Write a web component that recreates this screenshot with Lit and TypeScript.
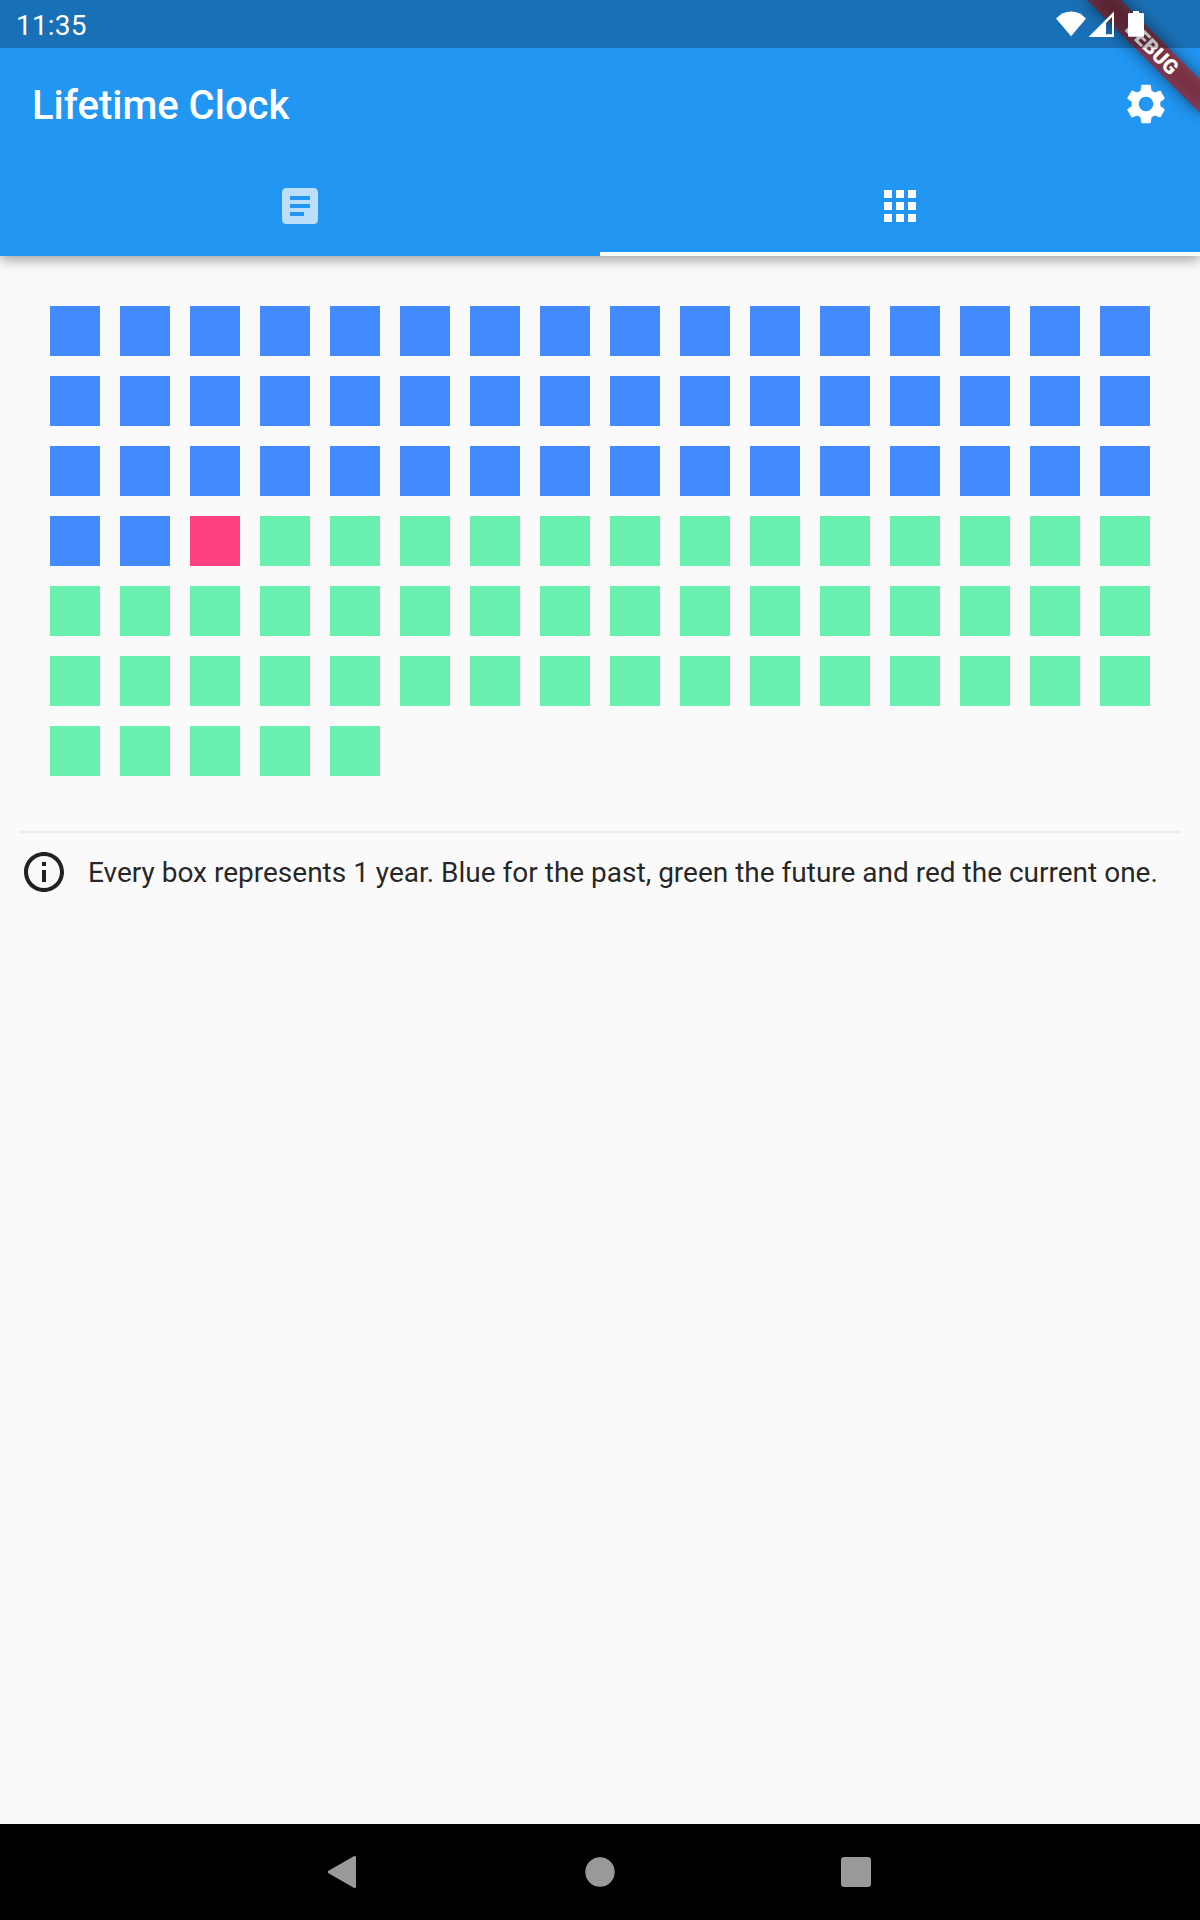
import { LitElement, html, css } from "lit";
import { customElement, property } from "lit/decorators.js";
import { classMap } from "lit/directives/class-map.js";

@customElement("status-bar")
class StatusBar extends LitElement {
  static styles = css`
    :host {
      display: flex;
      align-items: center;
      justify-content: space-between;
      height: 48px;
      box-sizing: border-box;
      padding: 0 54px 0 16px;
      background: rgba(0, 0, 0, 0.25);
      color: #fff;
      position: relative;
      z-index: 2;
    }
    .time {
      font-size: 28px;
      letter-spacing: 0.2px;
      line-height: 48px;
      padding-top: 2px;
      height: 46px;
    }
    svg {
      display: block;
    }
  `;
  render() {
    return html`
      <span class="time">11:35</span>
      <svg width="94" height="48" viewBox="1052 0 94 48" fill="#fff">
        <path d="M1071.1 36.3L1056 18.6Q1062.300 11.500 1071.100 11.500T1086 18.600Z" />
        <path fill-rule="evenodd" d="M1114 11.500V37H1088.500ZM1112 17L1106 23V34.200H1112Z" />
        <path d="M1133 11h6v2h3.700q1.300 0 1.300 1.300v21.200q0 1.300-1.300 1.300h-13.400q-1.300 0-1.300-1.300V14.300q0-1.300 1.300-1.300h3.700z" />
      </svg>
    `;
  }
}

@customElement("debug-banner")
class DebugBanner extends LitElement {
  static styles = css`
    :host {
      display: block;
      position: absolute;
      top: 0;
      right: 0;
      width: 200px;
      height: 200px;
      overflow: hidden;
      z-index: 1;
      pointer-events: none;
    }
    .shade,
    .ribbon {
      position: absolute;
      left: 120px;
      top: 56px;
      width: 160px;
      height: 24px;
      transform-origin: 80px -56px;
      transform: rotate(45deg);
    }
    .shade {
      background: rgba(0, 0, 0, 0.5);
      filter: blur(7.9px);
    }
    .ribbon {
      background: rgba(183, 28, 28, 0.627);
      color: #fff;
      font-size: 20.4px;
      font-weight: 900;
      line-height: 24px;
      text-align: center;
    }
  `;
  render() {
    return html`<div class="shade"></div><div class="ribbon">DEBUG</div>`;
  }
}

@customElement("tab-strip")
class TabStrip extends LitElement {
  static styles = css`
    :host {
      display: flex;
      height: 96px;
    }
    .tab {
      flex: 1;
      box-sizing: border-box;
      display: flex;
      align-items: center;
      justify-content: center;
      border-bottom: 4px solid transparent;
      color: rgba(255, 255, 255, 0.7);
    }
    .active {
      color: #fff;
      border-bottom-color: #fff;
    }
  `;
  render() {
    return html`
      <div class="tab">
        <svg width="48" height="48" viewBox="0 0 24 24" fill="currentColor">
          <path d="M19 3H5c-1.100 0-2 .9-2 2v14c0 1.100.9 2 2 2h14c1.100 0 2-.9 2-2V5c0-1.100-.9-2-2-2zm-5 14H7v-2h7v2zm3-4H7v-2h10v2zm0-4H7V7h10v2z" />
        </svg>
      </div>
      <div class="tab active">
        <svg width="48" height="48" viewBox="0 0 24 24" fill="currentColor">
          <path d="M4 8h4V4H4v4zm6 12h4v-4h-4v4zm-6 0h4v-4H4v4zm0-6h4v-4H4v4zm6 0h4v-4h-4v4zm6-10v4h4V4h-4zm-6 4h4V4h-4v4zm6 6h4v-4h-4v4zm0 6h4v-4h-4v4z" />
        </svg>
      </div>
    `;
  }
}

@customElement("year-grid")
class YearGrid extends LitElement {
  @property({ type: Number }) age = 50;
  @property({ type: Number }) total = 101;

  static styles = css`
    :host {
      display: grid;
      grid-template-columns: repeat(16, 50px);
      grid-auto-rows: 50px;
      gap: 20px;
    }
    .future {
      background: #69f0ae;
    }
    .past {
      background: #448aff;
    }
    .current {
      background: #ff4081;
    }
  `;
  render() {
    return Array.from({ length: this.total }, (_, year) => html`
      <div
        class=${classMap({
          past: year < this.age,
          current: year === this.age,
          future: year > this.age,
        })}
      ></div>
    `);
  }
}

@customElement("nav-bar")
class NavBar extends LitElement {
  static styles = css`
    :host {
      display: flex;
      justify-content: center;
      align-items: center;
      gap: 208px;
      height: 96px;
      background: #000;
    }
    svg {
      display: block;
      fill: #999;
      stroke: #999;
      stroke-linejoin: round;
    }
  `;
  render() {
    return html`
      <svg width="48" height="48" viewBox="0 0 48 48">
        <path d="M34.500 9.500V38.500L9.300 24Z" stroke-width="3" />
      </svg>
      <svg width="48" height="48" viewBox="0 0 48 48"><circle cx="24" cy="24" r="14.700" stroke="none" /></svg>
      <svg width="48" height="48" viewBox="0 0 48 48"><rect x="9" y="9" width="30" height="30" rx="3" stroke="none" /></svg>
    `;
  }
}

@customElement("app-root")
class AppRoot extends LitElement {
  static styles = css`
    :host {
      display: flex;
      flex-direction: column;
      position: relative;
      width: 1200px;
      height: 1920px;
      overflow: hidden;
      background: #fafafa;
      font-family: Roboto, sans-serif;
    }
    .header {
      background: #2196f3;
      box-shadow: 0 4px 12px rgba(0, 0, 0, 0.36);
    }
    .toolbar {
      display: flex;
      align-items: center;
      justify-content: space-between;
      height: 112px;
      box-sizing: border-box;
      padding: 0 30px 0 32px;
      color: #fff;
    }
    .title {
      margin: 0;
      padding-top: 4px;
      font-size: 40px;
      font-weight: 500;
      line-height: 48px;
    }
    .main {
      flex: 1;
      display: flex;
      flex-direction: column;
      padding: 50px 20px 0;
    }
    .years {
      padding: 0 30px;
    }
    .rule {
      height: 2px;
      margin: 55px 0 15px;
      background: #ebebeb;
    }
    .note {
      display: flex;
      align-items: flex-start;
      gap: 20px;
      color: rgba(0, 0, 0, 0.87);
      font-size: 28px;
      line-height: 50px;
      white-space: nowrap;
    }
    svg {
      display: block;
      flex: none;
    }
  `;
  render() {
    return html`
      <div class="header">
        <status-bar></status-bar>
        <div class="toolbar">
          <h1 class="title">Lifetime Clock</h1>
          <svg width="48" height="48" viewBox="0 0 24 24" fill="#fff">
            <path d="M19.140 12.940c.04-.3.06-.61.06-.94 0-.32-.02-.64-.07-.94l2.030-1.580c.18-.14.23-.41.12-.61l-1.920-3.320c-.12-.22-.37-.29-.59-.22l-2.390.96c-.5-.38-1.030-.7-1.620-.94L14.400 2.810c-.04-.24-.24-.41-.48-.41h-3.840c-.24 0-.43.17-.47.41L9.250 5.350C8.660 5.590 8.120 5.920 7.630 6.290L5.240 5.330c-.22-.08-.47 0-.59.22L2.740 8.870c-.12.21-.08.47.12.61l2.030 1.580c-.05.3-.09.63-.09.94s.02.64.07.94l-2.030 1.580c-.18.14-.23.41-.12.61l1.920 3.320c.12.22.37.29.59.22l2.390-.96c.5.38 1.030.7 1.620.94l.36 2.540c.05.24.24.41.48.41h3.840c.24 0 .44-.17.47-.41l.36-2.540c.59-.24 1.130-.56 1.620-.94l2.390.96c.22.08.47 0 .59-.22l1.920-3.320c.12-.22.07-.47-.12-.61l-2.010-1.580zM12 15.600c-1.980 0-3.600-1.620-3.600-3.600s1.620-3.600 3.600-3.600 3.600 1.620 3.600 3.600-1.620 3.600-3.600 3.600z" />
          </svg>
        </div>
        <tab-strip></tab-strip>
      </div>
      <debug-banner></debug-banner>
      <div class="main">
        <div class="years"><year-grid></year-grid></div>
        <div class="rule"></div>
        <div class="note">
          <svg width="48" height="48" viewBox="0 0 24 24" fill="currentColor">
            <path d="M11 17h2v-6h-2v6zm1-15C6.480 2 2 6.480 2 12s4.480 10 10 10 10-4.480 10-10S17.520 2 12 2zm0 18c-4.410 0-8-3.590-8-8s3.590-8 8-8 8 3.590 8 8-3.590 8-8 8zM11 9h2V7h-2v2z" />
          </svg>
          <span>Every box represents 1 year. Blue for the past, green the future and red the current one.</span>
        </div>
      </div>
      <nav-bar></nav-bar>
    `;
  }
}
